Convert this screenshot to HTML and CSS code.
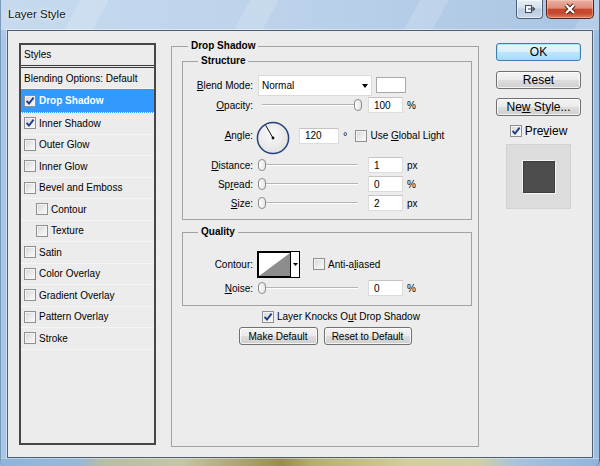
FILE: index.html
```html
<!DOCTYPE html>
<html>
<head>
<meta charset="utf-8">
<title>Layer Style</title>
<link rel="stylesheet" href="styles.css">
</head>
<body>
<div class="window">
  <div class="titlebar">
    <span class="title">Layer Style</span>
    <div class="caption">
      <div class="cbtn restore">
        <svg width="12" height="10" viewBox="0 0 12 10"><rect x="1.5" y="1.5" width="6" height="7" fill="#f4f7fb" stroke="#3f4b5b"/><path d="M4 5 H10.5 M8.5 3 L10.5 5 L8.5 7" stroke="#3f4b5b" stroke-width="1.2" fill="none"/></svg>
      </div>
      <div class="cbtn close">
        <svg width="16" height="12" viewBox="0 0 16 12"><path d="M4 2 L12 10 M12 2 L4 10" stroke="#4a1a10" stroke-width="4.2"/><path d="M4 2 L12 10 M12 2 L4 10" stroke="#fff" stroke-width="2.4"/></svg>
      </div>
    </div>
  </div>
  <div class="frame-mid">
    <div class="client">
      <div class="styles-list">
        <div class="list-head">Styles</div>
        <div class="item blend">Blending Options: Default</div>
        <div class="item first selected"><span class="cb"><svg viewBox="0 0 10 10" width="10" height="10"><path d="M1.6 4.8 L4 7.6 L8.6 1.6" fill="none" stroke="#1d3c8c" stroke-width="1.9"/></svg></span><b>Drop Shadow</b></div>
        <div class="item"><span class="cb"><svg viewBox="0 0 10 10" width="10" height="10"><path d="M1.6 4.8 L4 7.6 L8.6 1.6" fill="none" stroke="#1d3c8c" stroke-width="1.9"/></svg></span>Inner Shadow</div>
        <div class="item"><span class="cb"></span>Outer Glow</div>
        <div class="item"><span class="cb"></span>Inner Glow</div>
        <div class="item"><span class="cb"></span>Bevel and Emboss</div>
        <div class="item sub-item"><span class="cb"></span>Contour</div>
        <div class="item sub-item"><span class="cb"></span>Texture</div>
        <div class="item"><span class="cb"></span>Satin</div>
        <div class="item"><span class="cb"></span>Color Overlay</div>
        <div class="item"><span class="cb"></span>Gradient Overlay</div>
        <div class="item"><span class="cb"></span>Pattern Overlay</div>
        <div class="item"><span class="cb"></span>Stroke</div>
      </div>

      <fieldset class="group main">
        <legend>Drop Shadow</legend>
        <fieldset class="group sub structure">
          <legend>Structure</legend>
          <div class="row r-blend">
            <span class="lbl"><u>B</u>lend Mode:</span>
            <div class="select"><span>Normal</span><span class="arrow"></span></div>
            <div class="swatch"></div>
          </div>
          <div class="row r-opacity">
            <span class="lbl"><u>O</u>pacity:</span>
            <div class="slider"><div class="track"></div><div class="thumb" style="left:96px"></div></div>
            <div class="num">100</div>
            <span class="unit">%</span>
          </div>
          <div class="row r-angle">
            <span class="lbl up"><u>A</u>ngle:</span>
            <svg class="dial" width="34" height="34" viewBox="0 0 34 34"><defs><radialGradient id="dg" cx="45%" cy="40%" r="60%"><stop offset="0" stop-color="#fafafa"/><stop offset="1" stop-color="#e2e2e2"/></radialGradient></defs><circle cx="17" cy="17" r="15.6" fill="url(#dg)" stroke="#243f7c" stroke-width="1.5"/><line x1="17" y1="17" x2="9.6" y2="4.2" stroke="#111" stroke-width="1"/><circle cx="17" cy="17" r="1.4" fill="#111"/></svg>
            <div class="num wide up">120</div>
            <span class="deg up">°</span>
            <span class="cb up global"></span>
            <span class="cbtext up">Use <u>G</u>lobal Light</span>
          </div>
          <div class="row">
            <span class="lbl"><u>D</u>istance:</span>
            <div class="slider"><div class="track"></div><div class="thumb" style="left:0px"></div></div>
            <div class="num">1</div>
            <span class="unit">px</span>
          </div>
          <div class="row">
            <span class="lbl">Sp<u>r</u>ead:</span>
            <div class="slider"><div class="track"></div><div class="thumb" style="left:0px"></div></div>
            <div class="num">0</div>
            <span class="unit">%</span>
          </div>
          <div class="row">
            <span class="lbl"><u>S</u>ize:</span>
            <div class="slider"><div class="track"></div><div class="thumb" style="left:0px"></div></div>
            <div class="num">2</div>
            <span class="unit">px</span>
          </div>
        </fieldset>

        <fieldset class="group sub quality">
          <legend>Quality</legend>
          <div class="row r-contour">
            <span class="lbl tight">Contour:</span>
            <svg class="contour" width="43" height="27" viewBox="0 0 43 27"><rect x="0.5" y="0.5" width="42" height="26" fill="#fff" stroke="#000"/><rect x="1.5" y="1.5" width="32" height="24" fill="#fff" stroke="#000"/><polygon points="2,25 33,2 33,25" fill="#8c8c8c"/><polygon points="36,12 41,12 38.5,15" fill="#000"/></svg>
            <span class="cb anti"></span>
            <span class="cbtext">Anti-a<u>l</u>iased</span>
          </div>
          <div class="row r-noise">
            <span class="lbl"><u>N</u>oise:</span>
            <div class="slider"><div class="track"></div><div class="thumb" style="left:0px"></div></div>
            <div class="num">0</div>
            <span class="unit">%</span>
          </div>
        </fieldset>

        <div class="knocks">
          <span class="cb"><svg viewBox="0 0 10 10" width="10" height="10"><path d="M1.6 4.8 L4 7.6 L8.6 1.6" fill="none" stroke="#1d3c8c" stroke-width="1.9"/></svg></span>
          <span class="cbtext">Layer Knocks O<u>u</u>t Drop Shadow</span>
        </div>
        <div class="defaults">
          <div class="btn make"><span>Make Default</span></div>
          <div class="btn resetdef"><span>Reset to Default</span></div>
        </div>
      </fieldset>

      <div class="side">
        <div class="btn sbtn default"><span>OK</span></div>
        <div class="btn sbtn reset"><span>Reset</span></div>
        <div class="btn sbtn newstyle"><span>Ne<u>w</u> Style...</span></div>
        <div class="preview-row">
          <span class="cb"><svg viewBox="0 0 10 10" width="10" height="10"><path d="M1.6 4.8 L4 7.6 L8.6 1.6" fill="none" stroke="#1d3c8c" stroke-width="1.9"/></svg></span>
          <span>Pre<u>v</u>iew</span>
        </div>
        <div class="preview-box"><div class="preview-square"></div></div>
      </div>
    </div>
  </div>
  <div class="frame-bottom"></div>
</div>
</body>
</html>
```

FILE: styles.css
```css
* { box-sizing: border-box; }
html, body { margin: 0; padding: 0; }
body {
  width: 600px;
  height: 466px;
  overflow: hidden;
  font-family: "Liberation Sans", Arial, sans-serif;
  font-size: 10px;
  color: #000;
  background: #8fb3da;
}
u { text-decoration: underline; text-underline-offset: 1px; }

.window {
  width: 600px;
  height: 466px;
  display: flex;
  flex-direction: column;
  background:
    linear-gradient(to bottom, rgba(255,255,255,0.25), rgba(255,255,255,0) 40px),
    linear-gradient(to right, #a9c6e6 0%, #b3cde9 35%, #a6c3e3 70%, #9dbde0 100%);
  border-left: 1px solid #7b99bb;
  border-right: 1px solid #51677f;
  border-radius: 0 0 6px 6px;
  overflow: hidden;
}

/* title bar */
.titlebar {
  height: 30px;
  flex: none;
  display: flex;
  align-items: flex-start;
  padding: 0 5px 0 7px;
  background:
    repeating-linear-gradient(118deg, rgba(255,255,255,0) 0 70px, rgba(255,255,255,0.16) 70px 95px, rgba(255,255,255,0) 95px 150px),
    linear-gradient(to right, #c6daee 0%, #bed4eb 40%, #b2cbe6 75%, #a9c4e3 100%);
}
.title {
  margin-top: 6px;
  font-size: 11.5px;
  line-height: 16px;
  color: #111;
  text-shadow: 0 0 6px rgba(255,255,255,0.9), 0 0 2px rgba(255,255,255,0.8);
}
.caption {
  margin-left: auto;
  display: flex;
  gap: 3px;
}
.cbtn {
  height: 19px;
  display: flex;
  align-items: center;
  justify-content: center;
}
.restore {
  width: 27px;
  border: 1px solid #4d6078;
  border-top: none;
  border-radius: 0 0 4px 4px;
  background: linear-gradient(#e6edf5 0%, #d5e0ec 45%, #bccde0 50%, #c9d8e9 100%);
  box-shadow: inset 0 0 0 1px rgba(255,255,255,0.55);
}
.close {
  width: 48px;
  border: 1px solid #5a2318;
  border-top: none;
  border-radius: 0 0 5px 5px;
  background: linear-gradient(#eab0a2 0%, #de8d79 45%, #c8482f 52%, #c54a30 75%, #dc8262 100%);
  box-shadow: inset 0 0 0 1px rgba(255,220,210,0.4);
}

.frame-mid {
  flex: 1;
  display: flex;
  padding: 0 6px;
}
.frame-bottom {
  height: 8px;
  flex: none;
  background: linear-gradient(to right, #8fb4dc 0%, #98b8d8 13%, #b6bea4 17%, #c4c6a6 30%, #9a8c4f 47%, #b5ad72 52%, #d2cf9c 68%, #cfcfa6 80%, #a8c3dc 86%, #8fb4dc 100%);
  border-top: 1px solid rgba(255,255,255,0.4);
}

.client {
  flex: 1;
  display: flex;
  align-items: flex-start;
  background: #ececec;
  border: 1px solid #4f5f72;
  box-shadow: 0 0 0 1px rgba(255,255,255,0.45);
  padding: 12px 11px 0 11px;
}

/* styles list */
.styles-list {
  width: 137px;
  height: 402px;
  flex: none;
  border: 2px solid #474747;
  background: #ececec;
}
.list-head {
  height: 23px;
  line-height: 20px;
  padding-left: 3px;
  border-bottom: 3px double #3c3c3c;
}
.item {
  height: 21.5px;
  display: flex;
  align-items: center;
  padding-left: 3px;
  border-bottom: 1px dotted #ffffff;
  white-space: nowrap;
}
.item.blend { height: 21px; }
.item.first { height: 24px; }
.item.selected { background: #3399ff; color: #fff; }
.item.sub-item { padding-left: 15px; }
.item .cb { margin-right: 3px; }

/* checkbox */
.cb {
  width: 12px;
  height: 12px;
  flex: none;
  display: inline-flex;
  align-items: center;
  justify-content: center;
  border: 1px solid #8e8f8f;
  background: linear-gradient(135deg, #d2d4d8 0%, #eeeeee 60%, #fbfbfb 100%);
  box-shadow: inset 0 0 0 1px #f4f4f4;
}

/* group boxes */
fieldset.group {
  margin: 0;
  padding: 0;
  border: 1px solid #a2a2a2;
  min-width: 0;
}
fieldset.group > legend {
  padding: 0 3px;
  font-weight: bold;
  font-size: 10px;
  line-height: 12px;
}
fieldset.main {
  flex: none;
  width: 308px;
  height: 407px;
  margin: -3px 0 0 15px;
}
fieldset.main > legend { margin-left: 16px; }
fieldset.sub {
  width: 290px;
  margin: 3px 0 0 10px;
}
fieldset.sub > legend { margin-left: 15px; }
fieldset.structure { padding-bottom: 8px; }
fieldset.quality { margin-top: 6px; padding-bottom: 9px; }

.row {
  display: flex;
  align-items: center;
  height: 16px;
  margin-top: 3px;
  white-space: nowrap;
}
.row.r-blend { height: 21px; margin-top: 8px; }
.row.r-opacity { margin-top: 1px; }
.row.r-angle { height: 33px; margin-top: 8px; }
.row.r-contour { height: 27px; margin-top: 13px; }
.row.r-noise { margin-top: 2px; }

.lbl {
  width: 70px;
  flex: none;
  text-align: right;
  margin-right: 5px;
}
.lbl.tight { margin-right: 4px; }
.up { margin-bottom: 4px; }

.select {
  width: 114px;
  height: 21px;
  background: #fff;
  border: 1px solid #dadada;
  display: flex;
  align-items: center;
  padding-left: 3px;
}
.select .arrow {
  margin-left: auto;
  margin-right: 3px;
  width: 0;
  height: 0;
  border-left: 3.5px solid transparent;
  border-right: 3.5px solid transparent;
  border-top: 4px solid #000;
}
.swatch {
  width: 30px;
  height: 16px;
  margin-left: 4px;
  margin-bottom: 2px;
  background: #fff;
  border: 1px solid #a9a9a9;
}

.slider {
  width: 104px;
  height: 16px;
  flex: none;
  position: relative;
  display: flex;
  align-items: center;
}
.track {
  flex: 1;
  margin: 0 4px;
  height: 2px;
  border-top: 1px solid #b4b4b4;
  border-bottom: 1px solid #ffffff;
}
.thumb {
  position: absolute;
  top: 2px;
  width: 8px;
  height: 12px;
  border: 1px solid #8a8a8a;
  border-radius: 4px;
  background: linear-gradient(to right, #ffffff, #e6e6e6);
}

.num {
  width: 35px;
  height: 16px;
  flex: none;
  margin-left: 6px;
  background: #fff;
  border: 1px solid #dcdcdc;
  border-top-color: #c4c4c4;
  padding-left: 5px;
  display: flex;
  align-items: center;
}
.num.wide { width: 40px; margin-left: 9px; }
.unit { margin-left: 4px; }
.deg { margin-left: 4px; font-size: 11px; }
.dial { flex: none; margin-left: -2px; }
.cb.global { margin-left: 8px; }
.cbtext { margin-left: 3px; }
.contour { flex: none; }
.cb.anti { margin-left: 13px; margin-top: -2px; }

.knocks {
  display: flex;
  align-items: center;
  height: 13px;
  margin: 4px 0 0 90px;
  white-space: nowrap;
}
.defaults {
  display: flex;
  justify-content: center;
  gap: 6px;
  margin-top: 4px;
}

/* buttons */
.btn {
  height: 18px;
  display: flex;
  align-items: center;
  justify-content: center;
  border: 1px solid #707070;
  border-radius: 3px;
  background: linear-gradient(#f3f3f3 0%, #ebebeb 48%, #dddddd 52%, #cfcfcf 100%);
  box-shadow: inset 0 0 0 1px rgba(255,255,255,0.75);
  white-space: nowrap;
}
.btn.make { width: 79px; }
.btn.resetdef { width: 88px; }

.side {
  flex: none;
  width: 85px;
  margin-left: 17px;
  display: flex;
  flex-direction: column;
  align-items: center;
  font-size: 12px;
}
.btn.sbtn { width: 85px; font-size: 12px; }
.btn.default {
  border-color: #3c7fb1;
  background: linear-gradient(#eaf6fd 0%, #d9f0fc 48%, #bee6fd 52%, #a7d9f5 100%);
  box-shadow: inset 0 0 0 1px rgba(160,225,250,0.8);
}
.btn.reset { margin-top: 10px; }
.btn.newstyle { margin-top: 9px; }

.preview-row {
  display: flex;
  align-items: center;
  height: 13px;
  margin-top: 8px;
}
.preview-row .cb { margin-right: 3px; }
.preview-box {
  width: 65px;
  height: 65px;
  margin-top: 7px;
  display: flex;
  align-items: center;
  justify-content: center;
  border: 1px solid #d2d2d2;
  background-color: #e2e2e2;
  background-image: radial-gradient(circle, #d6d6d6 0.6px, transparent 0.8px);
  background-size: 2px 2px;
}
.preview-square {
  width: 32px;
  height: 32px;
  background: #4d4d4d;
  border: 1px solid #3c3c3c;
  box-shadow: 1px 1px 0 #f6f6f6, -1px -1px 0 #f6f6f6;
}
```
